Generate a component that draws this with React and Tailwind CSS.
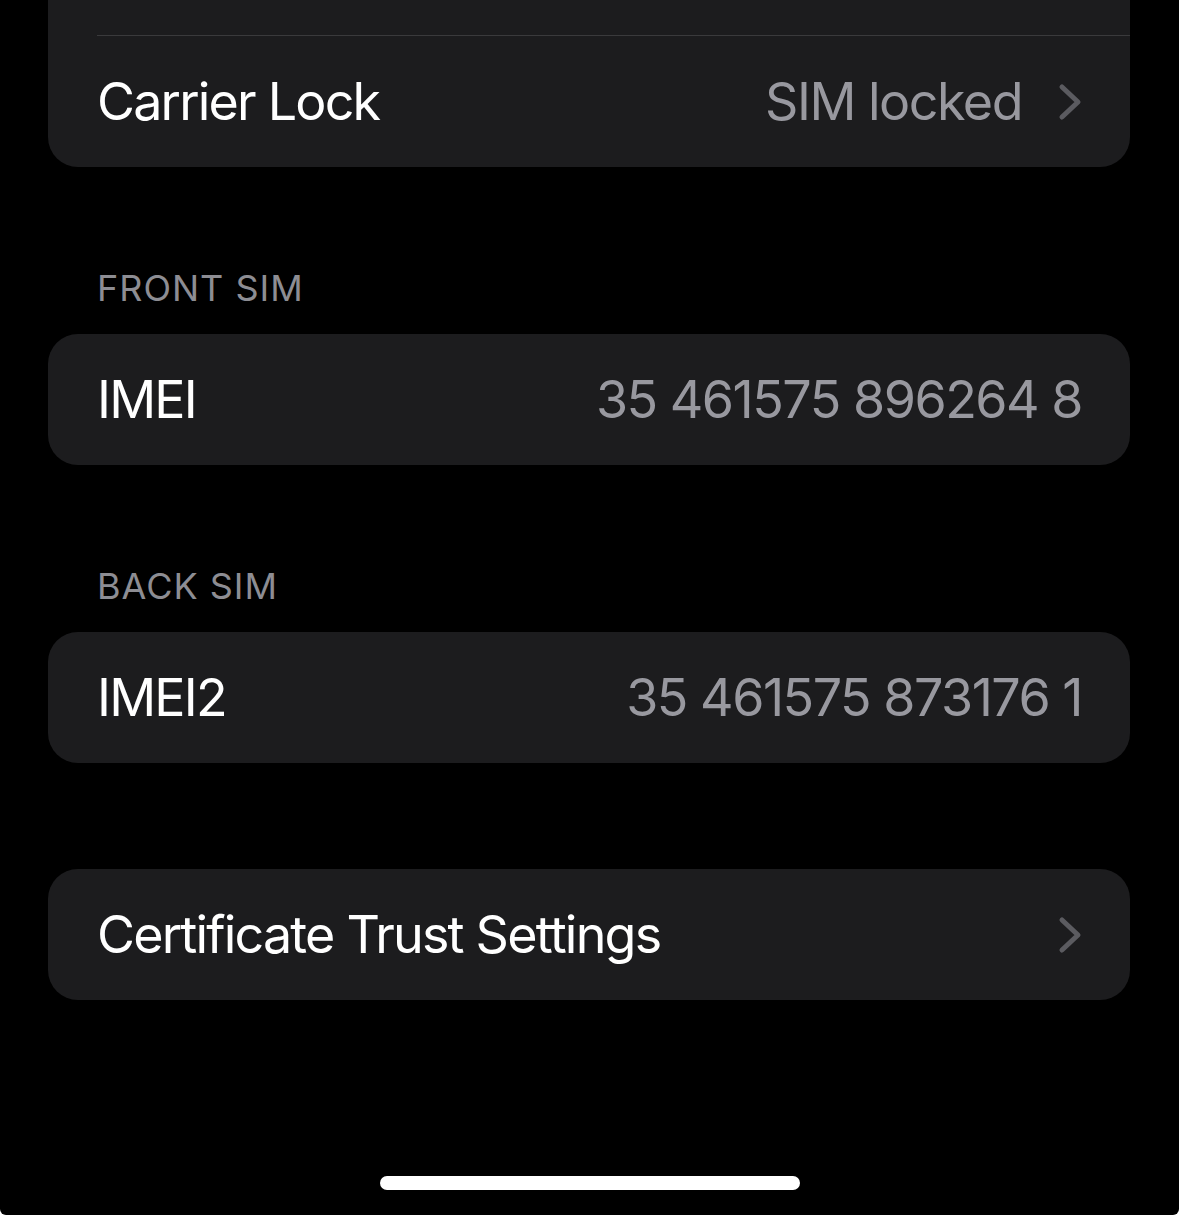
import React from 'react'

const Chevron = () => (
  <svg width="24" height="38" viewBox="0 0 24 38" fill="none" className="shrink-0">
    <polyline points="4,4 20,19 4,34" stroke="#5b5b60" strokeWidth="5" strokeLinecap="round" strokeLinejoin="round" />
  </svg>
)

function Row({ label, value, chevron }) {
  return (
    <div className="flex h-[131px] items-center justify-between pl-[49px] pr-[48px]">
      <span className="text-[52px] tracking-[-1.8px] text-white">{label}</span>
      <div className="flex items-center gap-[36px]">
        {value && <span className="text-[52px] tracking-[-1.5px] text-[#98989f]">{value}</span>}
        {chevron && <Chevron />}
      </div>
    </div>
  )
}

function Header({ children }) {
  return (
    <div className="pl-[97px] pt-[100px] pb-[24px] text-[36px] leading-[43px] tracking-[1px] text-[#8d8d93]">
      {children}
    </div>
  )
}

export default function App() {
  return (
    <div className="h-[1215px] w-[1179px] bg-white" style={{ fontFamily: 'Inter, "Noto Sans", sans-serif' }}>
      <div className="flex h-full flex-col overflow-hidden rounded-b-[6px] bg-black">
        <div className="ml-[48px] mr-[49px] -mt-[95px] shrink-0 rounded-[30px] bg-[#1c1c1e]">
          <div className="h-[130px]" />
          <div className="ml-[49px] h-px bg-[#3a3a3c]" />
          <Row label="Carrier Lock" value="SIM locked" chevron />
        </div>

        <Header>FRONT SIM</Header>
        <div className="ml-[48px] mr-[49px] rounded-[30px] bg-[#1c1c1e]">
          <Row label="IMEI" value="35 461575 896264 8" />
        </div>

        <Header>BACK SIM</Header>
        <div className="ml-[48px] mr-[49px] rounded-[30px] bg-[#1c1c1e]">
          <Row label="IMEI2" value="35 461575 873176 1" />
        </div>

        <div className="ml-[48px] mr-[49px] mt-[106px] rounded-[30px] bg-[#1c1c1e]">
          <Row label="Certificate Trust Settings" chevron />
        </div>

        <div className="mt-auto mb-[25px] flex justify-center">
          <div className="h-[14px] w-[420px] rounded-full bg-white" />
        </div>
      </div>
    </div>
  )
}
